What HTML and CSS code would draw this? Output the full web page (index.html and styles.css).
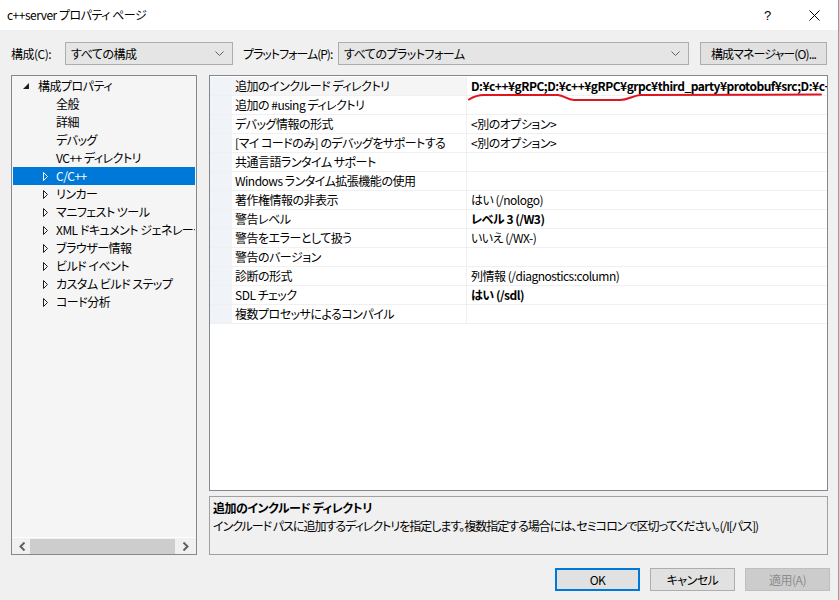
FILE: index.html
```html
<!DOCTYPE html>
<html lang="ja">
<head>
<meta charset="utf-8">
<title>c++server プロパティ ページ</title>
<link rel="stylesheet" href="styles.css">
</head>
<body>
<div class="window">
  <div class="titlebar">
    <span class="title">c++server プロパティ ページ</span>
    <span class="help">?</span>
    <span class="close"><svg width="11" height="11" viewBox="0 0 11 11"><path d="M0.5 0.5 L10.5 10.5 M10.5 0.5 L0.5 10.5" stroke="#000" stroke-width="1" fill="none"/></svg></span>
  </div>

  <div class="toolbar">
    <span class="lbl lbl-config">構成(C):</span>
    <div class="combo combo-config"><span class="combo-text">すべての構成</span><svg class="chev" width="9" height="5" viewBox="0 0 9 5"><polyline points="0.5,0.5 4.5,4.5 8.5,0.5" stroke="#606060" fill="none"/></svg></div>
    <span class="lbl lbl-platform">プラットフォーム(P):</span>
    <div class="combo combo-platform"><span class="combo-text">すべてのプラットフォーム</span><svg class="chev" width="9" height="5" viewBox="0 0 9 5"><polyline points="0.5,0.5 4.5,4.5 8.5,0.5" stroke="#606060" fill="none"/></svg></div>
    <button class="btn btn-manager">構成マネージャー(O)...</button>
  </div>

  <div class="main">
    <div class="tree">
      <ul class="tree-list">
        <li class="node level0"><span class="exp"><svg width="6" height="6" viewBox="0 0 6 6"><polygon points="6,0 6,6 0,6" fill="#1e1e1e"/></svg></span><span class="label">構成プロパティ</span></li>
        <li class="node level1 leaf"><span class="label">全般</span></li>
        <li class="node level1 leaf"><span class="label">詳細</span></li>
        <li class="node level1 leaf"><span class="label">デバッグ</span></li>
        <li class="node level1 leaf"><span class="label">VC++ ディレクトリ</span></li>
        <li class="node level1 selected"><span class="col"><svg width="6" height="9" viewBox="0 0 6 9"><polygon points="0.5,0.5 4.5,4.5 0.5,8.5" fill="none" stroke="#fff"/></svg></span><span class="label">C/C++</span></li>
        <li class="node level1"><span class="col"><svg width="6" height="9" viewBox="0 0 6 9"><polygon points="0.5,0.5 4.5,4.5 0.5,8.5" fill="none" stroke="#1e1e1e"/></svg></span><span class="label">リンカー</span></li>
        <li class="node level1"><span class="col"><svg width="6" height="9" viewBox="0 0 6 9"><polygon points="0.5,0.5 4.5,4.5 0.5,8.5" fill="none" stroke="#1e1e1e"/></svg></span><span class="label">マニフェスト ツール</span></li>
        <li class="node level1"><span class="col"><svg width="6" height="9" viewBox="0 0 6 9"><polygon points="0.5,0.5 4.5,4.5 0.5,8.5" fill="none" stroke="#1e1e1e"/></svg></span><span class="label">XML ドキュメント ジェネレーター</span></li>
        <li class="node level1"><span class="col"><svg width="6" height="9" viewBox="0 0 6 9"><polygon points="0.5,0.5 4.5,4.5 0.5,8.5" fill="none" stroke="#1e1e1e"/></svg></span><span class="label">ブラウザー情報</span></li>
        <li class="node level1"><span class="col"><svg width="6" height="9" viewBox="0 0 6 9"><polygon points="0.5,0.5 4.5,4.5 0.5,8.5" fill="none" stroke="#1e1e1e"/></svg></span><span class="label">ビルド イベント</span></li>
        <li class="node level1"><span class="col"><svg width="6" height="9" viewBox="0 0 6 9"><polygon points="0.5,0.5 4.5,4.5 0.5,8.5" fill="none" stroke="#1e1e1e"/></svg></span><span class="label">カスタム ビルド ステップ</span></li>
        <li class="node level1"><span class="col"><svg width="6" height="9" viewBox="0 0 6 9"><polygon points="0.5,0.5 4.5,4.5 0.5,8.5" fill="none" stroke="#1e1e1e"/></svg></span><span class="label">コード分析</span></li>
      </ul>
      <div class="hscroll">
        <span class="arrow"><svg width="7" height="9" viewBox="0 0 7 9"><polyline points="5.5,0.5 1.5,4.5 5.5,8.5" stroke="#606060" stroke-width="2" fill="none"/></svg></span>
        <span class="thumb"></span>
        <span class="arrow"><svg width="7" height="9" viewBox="0 0 7 9"><polyline points="1.5,0.5 5.5,4.5 1.5,8.5" stroke="#606060" stroke-width="2" fill="none"/></svg></span>
      </div>
    </div>

    <div class="right">
      <div class="grid">
        <div class="row active"><span class="gutter"></span><span class="name">追加のインクルード ディレクトリ</span><span class="value bold">D:¥c++¥gRPC;D:¥c++¥gRPC¥grpc¥third_party¥protobuf¥src;D:¥c++¥gRPC¥grpc¥include</span></div>
        <div class="row"><span class="gutter"></span><span class="name">追加の #using ディレクトリ</span><span class="value"></span></div>
        <div class="row"><span class="gutter"></span><span class="name">デバッグ情報の形式</span><span class="value">&lt;別のオプション&gt;</span></div>
        <div class="row"><span class="gutter"></span><span class="name">[マイ コードのみ] のデバッグをサポートする</span><span class="value">&lt;別のオプション&gt;</span></div>
        <div class="row"><span class="gutter"></span><span class="name">共通言語ランタイム サポート</span><span class="value"></span></div>
        <div class="row"><span class="gutter"></span><span class="name">Windows ランタイム拡張機能の使用</span><span class="value"></span></div>
        <div class="row"><span class="gutter"></span><span class="name">著作権情報の非表示</span><span class="value">はい (/nologo)</span></div>
        <div class="row"><span class="gutter"></span><span class="name">警告レベル</span><span class="value bold">レベル 3 (/W3)</span></div>
        <div class="row"><span class="gutter"></span><span class="name">警告をエラーとして扱う</span><span class="value">いいえ (/WX-)</span></div>
        <div class="row"><span class="gutter"></span><span class="name">警告のバージョン</span><span class="value"></span></div>
        <div class="row"><span class="gutter"></span><span class="name">診断の形式</span><span class="value">列情報 (/diagnostics:column)</span></div>
        <div class="row"><span class="gutter"></span><span class="name">SDL チェック</span><span class="value bold">はい (/sdl)</span></div>
        <div class="row"><span class="gutter"></span><span class="name">複数プロセッサによるコンパイル</span><span class="value"></span></div>
        <svg class="annot" width="620" height="40" viewBox="0 0 620 40"><path d="M259 23.5 C263 21 267 19 274 19 L348 19 C354 19.5 357 23.5 364 24 L410 24 C418 24 422 20 430 19 L611 18.5" stroke="#e0141e" stroke-width="2" fill="none" stroke-linecap="round"/></svg>
      </div>
      <div class="desc">
        <div class="desc-title">追加のインクルード ディレクトリ</div>
        <div class="desc-text">インクルード パスに追加するディレクトリを指定します。複数指定する場合には、セミコロンで区切ってください。(/I[パス])</div>
      </div>
    </div>
  </div>

  <div class="footer">
    <button class="btn btn-ok">OK</button>
    <button class="btn">キャンセル</button>
    <button class="btn btn-disabled">適用(A)</button>
  </div>
</div>
</body>
</html>
```

FILE: styles.css
```css
* { box-sizing: border-box; }

body {
  margin: 0;
  font-family: "Noto Sans CJK JP", "Noto Sans", sans-serif;
  font-size: 12px;
  font-feature-settings: "palt";
  letter-spacing: -0.5px;
  color: #000;
  background: #f0f0f0;
}

.window {
  width: 839px;
  height: 600px;
  border-right: 1px solid #9a9a9a;
  background: #f0f0f0;
  display: flex;
  flex-direction: column;
  overflow: hidden;
}

/* Title bar */
.titlebar {
  height: 30px;
  background: #fff;
  display: flex;
  align-items: center;
  padding-left: 7px;
  flex-shrink: 0;
}
.title { flex: 1; line-height: 30px; }
.help {
  width: 14px;
  font-size: 13px;
  font-family: "Liberation Sans", sans-serif;
  margin-right: 31px;
}
.close {
  display: flex;
  margin-right: 18px;
}

/* Toolbar */
.toolbar {
  margin-top: 12px;
  height: 23px;
  display: flex;
  align-items: center;
  padding-left: 11px;
  flex-shrink: 0;
}
.lbl { line-height: 23px; white-space: nowrap; flex-shrink: 0; }
.lbl-config { width: 54px; }
.lbl-platform { width: 95px; margin-left: 10px; letter-spacing: -1px; }
.combo {
  height: 23px;
  background: #e5e5e5;
  border: 1px solid #adadad;
  display: flex;
  align-items: center;
  padding: 0 8px 0 5px;
  flex-shrink: 0;
}
.combo-text { flex: 1; white-space: nowrap; }
.combo-config { width: 168px; }
.combo-platform { width: 351px; }
.chev { display: block; }

.btn {
  font-family: inherit;
  font-size: 12px;
  font-feature-settings: "palt";
  letter-spacing: -0.5px;
  background: #e1e1e1;
  border: 1px solid #adadad;
  color: #000;
  padding: 0;
  height: 23px;
  white-space: nowrap;
}
.btn-manager { width: 127px; margin-left: 11px; flex-shrink: 0; letter-spacing: -0.9px; }

/* Main area */
.main {
  margin-top: 10px;
  height: 480px;
  display: flex;
  padding-left: 11px;
  flex-shrink: 0;
}

.tree {
  width: 186px;
  height: 480px;
  border: 1px solid #828790;
  background: #f5f5f5;
  display: flex;
  flex-direction: column;
  flex-shrink: 0;
}
.tree-list {
  list-style: none;
  margin: 0;
  padding: 1px 0 0 0;
  flex: 1;
  overflow: hidden;
}
.node {
  height: 18px;
  line-height: 18px;
  display: flex;
  align-items: center;
  white-space: nowrap;
  margin-left: 1px;
  margin-right: 1px;
  overflow: hidden;
}
.label { flex-shrink: 0; }
.level0 { padding-left: 10px; }
.level0 .exp { width: 15px; display: flex; align-items: center; flex-shrink: 0; }
.level0 .exp svg { display: block; margin-top: -1px; }
.level1 { padding-left: 30px; }
.level1.leaf { padding-left: 43px; }
.col { width: 13px; display: flex; align-items: center; flex-shrink: 0; }
.col svg { display: block; }
.selected { background: #0078d7; color: #fff; }

.hscroll {
  height: 17px;
  border-top: 1px solid #fff;
  background: #f0f0f0;
  display: flex;
  align-items: center;
  padding: 0 3px 0 3px;
}
.arrow {
  width: 15px;
  display: flex;
  justify-content: center;
}
.thumb {
  height: 15px;
  width: 145px;
  background: #cdcdcd;
  margin-right: 1px;
}
.hscroll .arrow:last-child { margin-left: auto; }

.right {
  width: 619px;
  margin-left: 12px;
  display: flex;
  flex-direction: column;
  gap: 5px;
}

.grid {
  position: relative;
  height: 416px;
  background: #fff;
  border: 1px solid #828790;
  padding-top: 1px;
  overflow: hidden;
}
.row {
  height: 19px;
  display: flex;
  border-bottom: 1px solid #f0f0f0;
  line-height: 18px;
  white-space: nowrap;
}
.gutter {
  width: 22px;
  background: #f0f4f9;
  flex-shrink: 0;
}
.name {
  width: 235px;
  padding-left: 3px;
  border-right: 1px solid #f0f0f0;
  flex-shrink: 0;
  overflow: hidden;
}
.row.active .name { background: #f5f5f5; }
.value {
  flex: 1;
  padding-left: 4px;
  overflow: hidden;
}
.bold { font-weight: bold; }

.annot {
  position: absolute;
  left: 0;
  top: 0;
  pointer-events: none;
}

.desc {
  height: 59px;
  border: 1px solid #a0a0a0;
  background: #f0f0f0;
  padding: 2px 3px;
  line-height: 18px;
}
.desc-title { font-weight: bold; }
.desc-text { letter-spacing: -1px; white-space: nowrap; }

/* Footer */
.footer {
  margin-top: 13px;
  display: flex;
  justify-content: flex-end;
  gap: 10px;
  padding-right: 8px;
}
.footer .btn { width: 85px; height: 23px; }
.btn-ok { border: 2px solid #0078d7; }
.btn-disabled { background: #cccccc; border-color: #bfbfbf; color: #8d8d8d; }
```
